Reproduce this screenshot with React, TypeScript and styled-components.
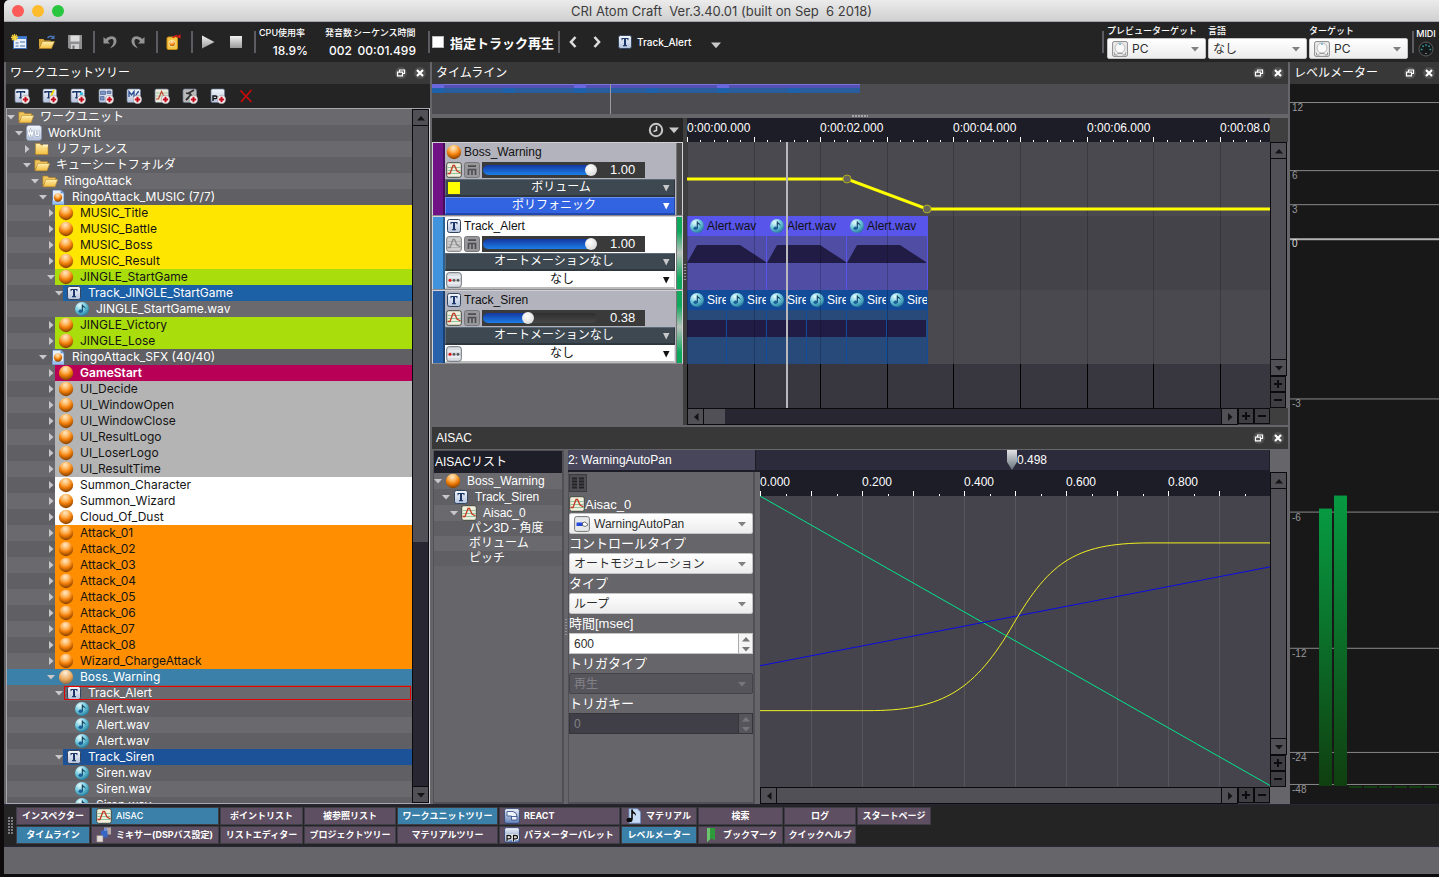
import React from 'react';
import styled, { createGlobalStyle, css } from 'styled-components';

const UI = `Inter, "Noto Sans CJK JP", sans-serif`;
const HELV = `"Liberation Sans", "Noto Sans CJK JP", sans-serif`;
const GREY = '#66656a';

const Global = createGlobalStyle`
  * { box-sizing: border-box; }
  body { margin: 0; background: #0d0b0c; font-family: ${UI}; font-size: 12px; color: #fff; overflow: hidden; }
  button, select, input { font: inherit; color: inherit; margin: 0; border: 0; padding: 0; border-radius: 0; background: none; }
  ul { list-style: none; margin: 0; padding: 0; }
  h1, h2, h3 { margin: 0; font-weight: 400; }
  svg { display: block; flex: none; }
  option { color: #222; background: #fff; }
`;

/* ---------- icons ---------- */

const HiddenSvg = styled.svg`position: absolute;`;
const Defs = () => (
  <HiddenSvg width="0" height="0" aria-hidden="true">
    <defs>
      <radialGradient id="ball" cx="0.45" cy="0.22" r="0.8">
        <stop offset="0" stopColor="#ffe9c8" />
        <stop offset="0.35" stopColor="#ffb45a" />
        <stop offset="0.6" stopColor="#f07d08" />
        <stop offset="1" stopColor="#7a3a00" />
      </radialGradient>
      <radialGradient id="paleBall" cx="0.45" cy="0.22" r="0.8">
        <stop offset="0" stopColor="#fff0da" />
        <stop offset="0.6" stopColor="#eaa65a" />
        <stop offset="1" stopColor="#86633f" />
      </radialGradient>
      <radialGradient id="wave" cx="0.35" cy="0.25" r="0.85">
        <stop offset="0" stopColor="#e6fbfd" />
        <stop offset="0.5" stopColor="#6cc6da" />
        <stop offset="1" stopColor="#176d90" />
      </radialGradient>
      <linearGradient id="tile" x1="0" y1="0" x2="0" y2="1">
        <stop offset="0" stopColor="#f4f7fc" />
        <stop offset="1" stopColor="#b4c2dc" />
      </linearGradient>
      <linearGradient id="folder" x1="0" y1="0" x2="0" y2="1">
        <stop offset="0" stopColor="#fff0b0" />
        <stop offset="1" stopColor="#f2bd3e" />
      </linearGradient>
      <linearGradient id="blueTile" x1="0" y1="0" x2="0" y2="1">
        <stop offset="0" stopColor="#f2f5fa" />
        <stop offset="1" stopColor="#5f7fb8" />
      </linearGradient>
      <linearGradient id="silver" x1="0" y1="0" x2="0" y2="1">
        <stop offset="0" stopColor="#f2f2f2" />
        <stop offset="1" stopColor="#9a9a9a" />
      </linearGradient>
      <linearGradient id="pin" x1="0" y1="0" x2="0" y2="1">
        <stop offset="0" stopColor="#e2e2e4" />
        <stop offset="1" stopColor="#66727c" />
      </linearGradient>
      <linearGradient id="meter" x1="0" y1="0" x2="0" y2="1">
        <stop offset="0" stopColor="#079a42" />
        <stop offset="1" stopColor="#103f0f" />
      </linearGradient>
    </defs>
  </HiddenSvg>
);

const Ball = ({ pale }: { pale?: boolean }) => (
  <svg width="16" height="16" viewBox="0 0 16 16">
    <circle cx="8" cy="8" r="7.2" fill={pale ? 'url(#paleBall)' : 'url(#ball)'} />
  </svg>
);
const TIcon = () => (
  <svg width="16" height="16" viewBox="0 0 16 16">
    <rect x="1.500" y="1.500" width="13" height="13" rx="2" fill="url(#tile)" stroke="#33445f" />
    <path d="M4.500 4h7v2.300h-.8L10.300 5H9v6l1 .3v.9H6v-.9L7 11V5H5.700L5.300 6.300h-.8z" fill="#1b3566" />
  </svg>
);
const Wav = () => (
  <svg width="16" height="16" viewBox="0 0 16 16">
    <circle cx="8" cy="8" r="7" fill="url(#wave)" />
    <path d="M8.300 3.400v6.800" stroke="#123e63" strokeWidth="1.100" />
    <path d="M8.300 3.200c.3 1.800 3.600 1.800 3.300 5-.6-1.500-1.700-2-3.300-2.200z" fill="#123e63" />
    <ellipse cx="6.600" cy="10.300" rx="2.100" ry="1.700" fill="#1d5f9a" />
  </svg>
);
const FolderOpen = () => (
  <svg width="16" height="16" viewBox="0 0 16 16">
    <path d="M.8 13V3h4.700l1.300 1.500h6.700V8H4z" fill="#efc45a" stroke="#a87c22" strokeWidth=".6" />
    <path d="M1.200 13.700 4 6.500H15.700L13 13.700z" fill="url(#folder)" stroke="#c29332" strokeWidth=".6" />
  </svg>
);
const FolderClosed = () => (
  <svg width="16" height="16" viewBox="0 0 16 16">
    <path d="M1.500 13.500V2.500h4.500l1 1.500h7v9.500z" fill="url(#folder)" stroke="#b58523" strokeWidth=".6" />
    <path d="M9 3.500h5v2H9z" fill="#fff3c4" />
  </svg>
);
const WU = () => (
  <svg width="16" height="16" viewBox="0 0 16 16">
    <rect x=".5" y=".5" width="15" height="15" rx="2.500" fill="url(#tile)" stroke="#8a98b8" strokeWidth=".6" />
    <path d="M2 5.500l1.300 5 1.300-4.500 1.300 4.500 1.300-5M9.500 5.500v3.500q0 1.700 1.700 1.700t1.700-1.700V5.500" fill="none" stroke="#8b9ab8" strokeWidth="2" />
    <path d="M2 5.500l1.300 5 1.300-4.500 1.300 4.500 1.300-5M9.500 5.500v3.500q0 1.700 1.700 1.700t1.700-1.700V5.500" fill="none" stroke="#fff" strokeWidth="1.300" />
  </svg>
);
const Sheet = () => (
  <svg width="16" height="16" viewBox="0 0 16 16">
    <path d="M2.500 1h8.500l3 3v11.500H2.500z" fill="#e8f1fc" stroke="#4a6ea8" strokeWidth=".8" />
    <path d="M11 1v3h3" fill="#8fb2e4" stroke="#4a6ea8" strokeWidth=".6" />
    <path d="M2.500 11.500l11.500 1v3H2.500z" fill="#9cc0ee" />
    <circle cx="8" cy="8.500" r="4.200" fill="url(#ball)" />
  </svg>
);
const Aisac = ({ off }: { off?: boolean }) => (
  <svg width="16" height="16" viewBox="0 0 16 16">
    <rect x=".7" y=".7" width="14.600" height="14.600" rx="2" fill={off ? '#cfcfcf' : '#f0efdc'} stroke={off ? '#777' : '#444a40'} />
    <path d="M1.500 5.500h13M1.500 8.500h13M1.500 11.500h13" stroke={off ? '#b4b4b4' : '#8fc4a2'} strokeWidth="1" />
    <path d="M1.500 11.500h2.500L7 3.500h1.500L11 9l3.500 2" fill="none" stroke={off ? '#8a8a8a' : '#c23a22'} strokeWidth="1.300" />
  </svg>
);
const Mute = () => (
  <svg width="16" height="16" viewBox="0 0 16 16">
    <rect x=".5" y=".5" width="15" height="15" rx="2" fill="#98989b" stroke="#77777b" />
    <path d="M4 4.200h8M4.500 13V7.500h7V13M8 7.500V13" fill="none" stroke="#4e4e52" strokeWidth="1.700" />
  </svg>
);
const Dots = () => (
  <svg width="16" height="16" viewBox="0 0 16 16">
    <rect x=".7" y=".7" width="14.600" height="14.600" rx="2.500" fill="#d9dee4" stroke="#6a6f76" />
    <path d="M1.500 5h13M1.500 11h13" stroke="#f7f9fb" />
    <circle cx="4" cy="8.300" r="1.500" fill="#e01010" />
    <circle cx="8" cy="8.300" r="1.400" fill="#555" />
    <circle cx="12" cy="8.300" r="1.400" fill="#555" />
  </svg>
);
const Disk = () => (
  <svg width="16" height="16" viewBox="0 0 16 16">
    <rect x=".6" y=".6" width="14.800" height="14.800" rx="1.500" fill="#ececec" stroke="#8a8a8a" />
    <circle cx="8" cy="7" r="5" fill="#fafafa" stroke="#aaa" strokeWidth=".8" />
    <path d="M2.500 11.500v2.500h3M13.500 11.500v2.500h-3M5.500 12.500h5" fill="none" stroke="#999" />
    <path d="M7.200 2.500h1.600v1.300H7.200z" fill="#2aa0d8" />
  </svg>
);
const Plus = () => (
  <g>
    <circle cx="11.500" cy="11.500" r="4.200" fill="#f6f6f6" stroke="#999" strokeWidth=".6" />
    <path d="M11.500 8.800v5.400M8.800 11.500h5.400" stroke="#c40d1e" strokeWidth="2" />
  </g>
);
const AddIcon = ({ kind }: { kind: string }) => (
  <svg width="16" height="16" viewBox="0 0 16 16">
    <rect x="1" y="1" width="13.500" height="13.500" rx="1.500" fill={kind === 'curve' ? '#eceadb' : kind === 'act' ? '#b9b9b9' : 'url(#tile)'} stroke="#6f7c96" strokeWidth=".7" />
    {kind[0] === 't' && <path d="M3 5V3.700h7.500V5M6.700 3.700V9.500M5.300 9.700h3" fill="none" stroke="#1b3566" strokeWidth="1.400" />}
    {kind === 't2' && <path d="M12 2 9 8" stroke="#f0d400" strokeWidth="1.800" />}
    {kind === 't3' && <path d="M10 4.500h3v2.500h-3z" fill="#35c4e8" />}
    {kind === 'grid' && <path d="M2.500 3h5v3.500h-5zM9 3h4v2.500H9zM2.500 8.500h3.500V12H2.500z" fill="#7d96c4" stroke="#3c5486" strokeWidth=".6" />}
    {kind === 'm' && <path d="M3 9V3.500L5.500 7 8 3.500V9M9 8c2 0 1-4 4-4.500" fill="none" stroke="#2a4c92" strokeWidth="1.300" />}
    {kind === 'curve' && <><path d="M1.500 5h12.500M1.500 8h12.500" stroke="#8fb79a" strokeWidth=".8" /><path d="M2 11h2.500L7.500 3.500 10 8.500" fill="none" stroke="#c0452e" strokeWidth="1.200" /></>}
    {kind === 'act' && <path d="M4 12 9 7l-2-2 5-3M8 6l-4-1M9 7l2 3" fill="none" stroke="#333" strokeWidth="1.800" />}
    {kind === 'p' && <path d="M3 13V8h2.500q1.500 0 1.500 1.300T5.500 10.600H3" fill="none" stroke="#111" strokeWidth="1.400" />}
    <Plus />
  </svg>
);
const Cross = () => (
  <svg width="14" height="14" viewBox="0 0 14 14">
    <path d="M1.500 1.500 12.500 13M12.500 1 2 13" stroke="#cc0a0a" strokeWidth="1.700" />
  </svg>
);
const NewProj = () => (
  <svg width="16" height="16" viewBox="0 0 16 16">
    <rect x="2.500" y="2.500" width="13" height="12" fill="#eaf1fb" stroke="#3f6fb8" />
    <path d="M3 4h12" stroke="#3f7fd8" strokeWidth="2" />
    <path d="M4.500 9h3M4.500 12h3M9 8h5M9 12h5" stroke="#7a9cc8" strokeWidth="1.600" />
    <path d="M3.500 0v7M0 3.500h7M1 1l5 5M6 1 1 6" stroke="#f7d23a" strokeWidth="1.300" />
  </svg>
);
const OpenProj = () => (
  <svg width="18" height="16" viewBox="0 0 18 16">
    <path d="M1 14V5h4.500l1 1.500h6V9H4z" fill="#d9a63a" />
    <path d="M1 14.500 4.500 7.500H16.500L13.500 14.500z" fill="url(#folder)" stroke="#b58523" strokeWidth=".6" />
    <path d="M9.500 4Q12 1 15 3" fill="none" stroke="#4777b8" strokeWidth="1.300" />
    <path d="M16.500 1v4h-4z" fill="#4777b8" />
  </svg>
);
const Save = () => (
  <svg width="16" height="16" viewBox="0 0 16 16">
    <path d="M1 1h14v14H2.500L1 13.500z" fill="#8f8f92" />
    <path d="M3.500 1.500h9v6h-9z" fill="#dcdcdc" />
    <path d="M4 10h8v5H4z" fill="#cfcfcf" />
    <path d="M5.500 11.500h2V15h-2z" fill="#6f6f72" />
  </svg>
);
const Undo = ({ flip }: { flip?: boolean }) => (
  <svg width="16" height="16" viewBox="0 0 16 16">
    <g transform={flip ? 'translate(16 0) scale(-1 1)' : undefined} fill="#939396">
      <path d="M1.500 3v6.500H8L5.800 7.200C8 4.500 11 4.300 11.500 6.800 12 9.500 10 12 8 14.500 12 13 14.800 10 14.500 6.500 14 1.500 7.500 1 3.700 5z" />
    </g>
  </svg>
);
const Build = () => (
  <svg width="16" height="16" viewBox="0 0 16 16">
    <rect x="2" y="3" width="10.500" height="12.500" rx="1.500" fill="#f6c544" stroke="#c98d12" />
    <circle cx="7.200" cy="9.500" r="3.300" fill="url(#ball)" stroke="#fbe7a0" />
    <path d="M8 4Q9 1.500 12.500 1.700" fill="none" stroke="#e01515" strokeWidth="1.300" />
    <path d="M15.500 0v4.500L11.500 3z" fill="#e01515" />
  </svg>
);
const Play = () => (
  <svg width="14" height="14" viewBox="0 0 14 14"><path d="M1 .5 13.500 7 1 13.500z" fill="url(#silver)" /></svg>
);
const Stop = () => (
  <svg width="14" height="14" viewBox="0 0 14 14"><path d="M1 1h12v12H1z" fill="url(#silver)" /></svg>
);
const Chevron = ({ right }: { right?: boolean }) => (
  <svg width="10" height="14" viewBox="0 0 10 14">
    <path d={right ? 'M2.500 2 7 7l-4.500 5' : 'M7.500 2 3 7l4.500 5'} fill="none" stroke="#dcdcdc" strokeWidth="2.600" />
  </svg>
);
const Tri = ({ dir, color = '#c8c8ca', size = 8 }: { dir: 'u' | 'd' | 'l' | 'r' | 'deep'; color?: string; size?: number }) => {
  const d = { u: 'M0 6.500h8L4 2z', d: 'M0 2h8L4 6.500z', l: 'M6.500 0v8L2 4z', r: 'M2 0v8l4.500-4z', deep: 'M1 1h6.500L4.200 7.500z' }[dir];
  return <svg width={size} height={size} viewBox="0 0 8 8"><path d={d} fill={color} /></svg>;
};
const Midi = () => (
  <svg width="16" height="16" viewBox="0 0 16 16">
    <circle cx="8" cy="8" r="7" fill="#16191a" stroke="#5c5c5e" />
    <path d="M3.600 8.500h.1M5 5.300h.1M8 4h.1M11 5.300h.1M12.300 8.500h.1" stroke="#35a5a5" strokeWidth="1.500" strokeLinecap="square" />
    <path d="M7 12.500h2" stroke="#777" />
  </svg>
);
const Clock = () => (
  <svg width="16" height="16" viewBox="0 0 16 16">
    <circle cx="8" cy="8" r="6.200" fill="#2a2a2a" stroke="#c6c6c6" strokeWidth="2" />
    <path d="M8.500 4v4.500L5.500 9.500" fill="none" stroke="#d6d6d6" strokeWidth="1.500" />
  </svg>
);
const Undock = () => (
  <svg width="12" height="12" viewBox="0 0 12 12">
    <circle cx="6" cy="6" r="6" fill="#505050" />
    <path d="M4.500 5V3h5v3.500H8M2.500 5.200h5v3.600h-5z" fill="none" stroke="#fff" strokeWidth="1.200" />
  </svg>
);
const Close = () => (
  <svg width="12" height="12" viewBox="0 0 12 12">
    <circle cx="6" cy="6" r="6" fill="#505050" />
    <path d="M3 3l6 6M9 3 3 9" stroke="#fff" strokeWidth="2.200" />
  </svg>
);
const Mixer = () => (
  <svg width="16" height="16" viewBox="0 0 16 16">
    <path d="M8 .5h7v7H8z" fill="#b8a9a4" />
    <path d="M5 3.500h6.500v7H5z" fill="#3566c8" />
    <path d="M.8 8.500H7v6.500H.8z" fill="#e4dcd8" stroke="#857b7b" strokeWidth=".6" />
    <path d="M8 1h3v2.500H8z" fill="#6f93e0" />
  </svg>
);
const Reactor = () => (
  <svg width="16" height="16" viewBox="0 0 16 16">
    <rect x=".6" y=".6" width="14.800" height="14.800" rx="2" fill="url(#blueTile)" stroke="#2c3f70" strokeWidth=".8" />
    <path d="M3 3.500h6q4 1 4 5V12H7.500V8H3z" fill="#f0f4fb" stroke="#3d568f" strokeWidth=".9" />
    <path d="M7.500 8.500H13" fill="none" stroke="#3d568f" strokeWidth=".9" />
  </svg>
);
const Palette = () => (
  <svg width="16" height="16" viewBox="0 0 16 16">
    <rect x=".6" y=".6" width="14.800" height="14.800" rx="2" fill="url(#blueTile)" stroke="#2c3f70" strokeWidth=".8" />
    <path d="M3 14.500V8.500h2.300Q7 8.500 7 10.200t-1.700 1.700H3M9.500 14.500V8.500h2.300q1.700 0 1.700 1.700t-1.700 1.700H9.500" fill="none" stroke="#fff" strokeWidth="2.800" />
    <path d="M3 14.500V8.500h2.300Q7 8.500 7 10.200t-1.700 1.700H3M9.500 14.500V8.500h2.300q1.700 0 1.700 1.700t-1.700 1.700H9.500" fill="none" stroke="#111" strokeWidth="1.300" />
  </svg>
);
const Material = () => (
  <svg width="16" height="16" viewBox="0 0 16 16">
    <path d="M3 .8h8.500L14.500 4v11.200H3z" fill="#c8dcf6" stroke="#6c8fc4" strokeWidth=".8" />
    <path d="M6 1.500v10" stroke="#0a0a0a" strokeWidth="1.600" />
    <path d="M6 1c.5 3 4.500 3 4 7C9 6 7.500 5.500 6 5.500z" fill="#0a0a0a" />
    <ellipse cx="3.500" cy="12" rx="3" ry="2.200" fill="#0a0a0a" />
  </svg>
);
const Bookmark = () => (
  <svg width="16" height="16" viewBox="0 0 16 16">
    <path d="M4 1h8v12.500l-3.500-2L4 15z" fill="#2f9a3a" /><path d="M4 1h3v11.500L4 15z" fill="#6cc56e" />
  </svg>
);
const Knob = () => (
  <svg width="16" height="16" viewBox="0 0 16 16">
    <rect x=".6" y=".6" width="14.800" height="14.800" rx="2" fill="#e6e8ea" stroke="#777" />
    <path d="M2.500 6.500h7v3.500h-7z" fill="#2348d8" /><path d="M8.500 7l2-1 2 1 1.500 2-3 1.500L8.500 9.500z" fill="#fff" stroke="#555" strokeWidth=".8" />
  </svg>
);

/* ---------- window frame ---------- */

const Window = styled.div`
  height: 100vh; min-height: 600px; padding: 0 0 3px 4px;
  display: flex; flex-direction: column;
`;
const TitleBar = styled.header`
  flex: none; height: 22px; display: flex; align-items: center; padding: 0 8px; gap: 8px;
  border-radius: 5px 0 0 0; background: linear-gradient(#ebebeb, #d0d0d0); border-bottom: 1px solid #a5a5b0; color: #3c3c3c;
`;
const Light = styled.button<{ $c: string }>`
  width: 12px; height: 12px; border-radius: 50%; background: ${p => p.$c};
`;
const Title = styled.h1`flex: 1; text-align: center; font-size: 13px; line-height: 20px; white-space: pre; padding-right: 60px;`;

const ToolBar = styled.div`
  flex: none; height: 40px; display: flex; align-items: center; background: #242424; padding: 0 2px 0 1px; white-space: nowrap;
`;
const Tool = styled.button<{ $w?: number }>`
  width: ${p => p.$w ?? 28}px; height: 28px; display: flex; align-items: center; justify-content: center;
`;
const Sep = styled.div`flex: none; width: 2px; height: 22px; margin: 0 1px 0 4px; background: #5c5c62;`;
const Stat = styled.dl<{ $w: number }>`
  margin: 0; width: ${p => p.$w}px; display: flex; flex-direction: column; gap: 4px; text-align: right;
  dt { font-size: 9px; line-height: 12px; font-weight: 500; text-align: left; }
  dd { margin: 0; font-size: 12px; line-height: 16px; font-weight: 500; }
`;
const Stats = styled.div`display: flex; padding: 2px 8px 0 2px;`;
const Gap = styled.div<{ $w: number }>`flex: none; width: ${p => p.$w}px;`;
const TrackPlay = styled.label`
  display: flex; align-items: center; gap: 6px; padding: 0 0 0 1px; font-size: 13px; font-weight: 700;
  input { appearance: none; width: 12px; height: 12px; background: #fff; border: 1px solid #bbb; }
`;
const Current = styled.button`
  display: flex; align-items: center; gap: 4px; margin-left: 8px; font-size: 10px; font-weight: 500;
  svg:last-child { margin: 6px 0 0 16px; }
`;
const Fill = styled.div`flex: 1;`;
const Target = styled.label`
  display: flex; flex-direction: column; gap: 1px; width: 99px; margin-left: 2px; font-size: 9px; line-height: 12px; font-weight: 500;
`;
const ComboBox = styled.div<{ $off?: boolean }>`
  display: flex; align-items: center; height: 21px; padding: 0 6px 0 4px; border-radius: 2px;
  background: ${p => (p.$off ? '#56555c' : 'linear-gradient(#fff, #ececec)')};
  border: 1px solid ${p => (p.$off ? '#44434a' : '#c4c4c4')};
  color: ${p => (p.$off ? '#828188' : '#2e2e2e')};
  select { appearance: none; flex: 1; min-width: 0; height: 19px; font-size: 12px; font-weight: 400; opacity: 1; color: inherit; outline: 0; }
  svg + select { padding-left: 4px; }
`;
const Combo = ({ id, value, icon, off }: { id?: string; value: string; icon?: React.ReactNode; off?: boolean }) => (
  <ComboBox $off={off}>
    {icon}
    <select id={id} disabled={off} aria-label={id ? undefined : value}><option>{value}</option></select>
    <Tri dir="d" color={off ? '#77767d' : '#808080'} />
  </ComboBox>
);
const MidiBox = styled.div`display: flex; flex-direction: column; align-items: center; gap: 1px; font-size: 9px; line-height: 12px; font-weight: 500; width: 22px;`;

const Main = styled.main`
  flex: 1; min-height: 0; display: grid; grid-template-columns: 424px minmax(0, 1fr) 149px; gap: 2px;
  background: ${GREY}; padding-left: 2px;
`;
const Panel = styled.section`min-height: 0; min-width: 0; display: flex; flex-direction: column;`;
const PanelHead = styled.div`
  flex: none; height: 22px; padding: 0 4px 0 4px; display: flex; align-items: center; gap: 7px; background: #383838;
  h2 { flex: 1; font-size: 12px; line-height: 20px; font-family: ${HELV}; }
`;
const Head = ({ title }: { title: string }) => (
  <PanelHead>
    <h2>{title}</h2>
    <button aria-label="Undock"><Undock /></button>
    <button aria-label="Close"><Close /></button>
  </PanelHead>
);

/* ---------- scroll bars ---------- */

const Bar = styled.div<{ $v?: boolean }>`
  flex: none; display: flex; flex-direction: ${p => (p.$v ? 'column' : 'row')};
  ${p => (p.$v ? 'width: 17px;' : 'height: 17px;')}
  background: #282731; border: 1px solid #0b0b0d;
`;
const BarFill = styled.div<{ $v?: boolean }>`flex: 1; min-width: 0; min-height: 0; display: flex; flex-direction: ${p => (p.$v ? 'column' : 'row')};`;
const Thumb = styled.div<{ $len: number }>`flex: 0 0 ${p => p.$len}%; background: #515056;`;
const BarBtn = styled.button<{ $v?: boolean }>`
  flex: none; width: ${p => (p.$v ? 15 : 16)}px; height: ${p => (p.$v ? 16 : 15)}px; background: #515056;
  display: flex; align-items: center; justify-content: center;
  ${p => (p.$v ? 'border-bottom: 1px solid #0b0b0d; &:last-child { border-bottom: 0; border-top: 1px solid #0b0b0d; }'
    : 'border-right: 1px solid #0b0b0d; &:last-child { border-right: 0; border-left: 1px solid #0b0b0d; }')}
`;
const ZoomBtn = styled.button`
  flex: none; width: 16px; height: 16px; background: #3f3e42; border: 1px solid #0b0b0d;
  display: flex; align-items: center; justify-content: center;
`;
const Scroll = ({ v, len = 100 }: { v?: boolean; len?: number }) => (
  <>
    <BarBtn $v={v} aria-label="Back"><Tri dir={v ? 'u' : 'l'} color="#141416" /></BarBtn>
    <BarFill $v={v}><Thumb $len={len} /></BarFill>
    <BarBtn $v={v} aria-label="Forward"><Tri dir={v ? 'd' : 'r'} color="#141416" /></BarBtn>
  </>
);
const GrowBar = styled(Bar)`flex: 1; min-height: 0; min-width: 0;`;
const Zooms = () => (
  <>
    <ZoomBtn aria-label="Zoom in"><svg width="8" height="8"><path d="M4 0v8M0 4h8" stroke="#0d0d0f" strokeWidth="2" /></svg></ZoomBtn>
    <ZoomBtn aria-label="Zoom out"><svg width="8" height="8"><path d="M0 4h8" stroke="#0d0d0f" strokeWidth="2" /></svg></ZoomBtn>
  </>
);

/* ---------- work unit tree ---------- */

const AddBar = styled.div`
  flex: none; height: 24px; padding-left: 2px; display: flex; align-items: center; background: #242424;
`;
const TreeWrap = styled.div`
  flex: 1; min-height: 0; display: flex; border: 1px solid #a8a8ac; border-right-color: #d0d0d4;
`;
const Rows = styled.ul`flex: 1; min-width: 0; overflow: hidden;`;
const Row = styled.li<{ $lv: number; $bg?: string; $full?: boolean; $ink?: string; $h?: number }>`
  height: ${p => p.$h ?? 16}px; display: flex; padding-left: ${p => p.$lv * 8}px; white-space: nowrap;
  background: ${p => (p.$full ? p.$bg : '#69696e')}; color: ${p => p.$ink ?? '#fff'};
  &:nth-child(even) { background: ${p => (p.$full ? p.$bg : '#5f5f64')}; }
`;
const Twist = styled.button`flex: none; width: 8px; height: 16px; display: flex; align-items: center; justify-content: center;`;
const Cell = styled.div<{ $bg?: string; $ring?: boolean; $bold?: boolean }>`
  flex: 1; height: 16px; display: flex; align-items: center; gap: 6px; padding-left: 3px; background: ${p => p.$bg ?? 'transparent'};
  font-size: 12px; line-height: 16px; font-weight: ${p => (p.$bold ? 600 : 400)};
  ${p => p.$ring && css`outline: 1px solid #e80000; outline-offset: -2px;`}
`;

const icons = {
  fo: <FolderOpen />, fc: <FolderClosed />, wu: <WU />, sheet: <Sheet />, ball: <Ball />, pale: <Ball pale />, t: <TIcon />, wav: <Wav />, aisac: <Aisac />,
};
type Item = { lv: number; ic: keyof typeof icons; t: string; open?: boolean; leaf?: boolean; bg?: string; ink?: string; full?: boolean; ring?: boolean; bold?: boolean };
const cues = (names: string[], bg: string): Item[] => names.map(t => ({ lv: 5, ic: 'ball', t, bg, ink: '#141414' }));
const wavs = (t: string, n: number): Item[] => Array.from({ length: n }, () => ({ lv: 7, ic: 'wav', t, leaf: true }));

const tree: Item[] = [
  { lv: 0, ic: 'fo', t: 'ワークユニット', open: true },
  { lv: 1, ic: 'wu', t: 'WorkUnit', open: true },
  { lv: 2, ic: 'fc', t: 'リファレンス' },
  { lv: 2, ic: 'fo', t: 'キューシートフォルダ', open: true },
  { lv: 3, ic: 'fo', t: 'RingoAttack', open: true },
  { lv: 4, ic: 'sheet', t: 'RingoAttack_MUSIC (7/7)', open: true },
  ...cues(['MUSIC_Title', 'MUSIC_Battle', 'MUSIC_Boss', 'MUSIC_Result'], '#ffe600'),
  { lv: 5, ic: 'ball', t: 'JINGLE_StartGame', open: true, bg: '#aadd0c', ink: '#141414' },
  { lv: 6, ic: 't', t: 'Track_JINGLE_StartGame', open: true, bg: '#1c60a6' },
  { lv: 7, ic: 'wav', t: 'JINGLE_StartGame.wav', leaf: true },
  ...cues(['JINGLE_Victory', 'JINGLE_Lose'], '#aadd0c'),
  { lv: 4, ic: 'sheet', t: 'RingoAttack_SFX (40/40)', open: true },
  { lv: 5, ic: 'ball', t: 'GameStart', bg: '#b80057', bold: true },
  ...cues(['UI_Decide', 'UI_WindowOpen', 'UI_WindowClose', 'UI_ResultLogo', 'UI_LoserLogo', 'UI_ResultTime'], '#b4b4b4'),
  ...cues(['Summon_Character', 'Summon_Wizard', 'Cloud_Of_Dust'], '#ffffff'),
  ...cues(['Attack_01', 'Attack_02', 'Attack_03', 'Attack_04', 'Attack_05', 'Attack_06', 'Attack_07', 'Attack_08', 'Wizard_ChargeAttack'], '#ff8f00'),
  { lv: 5, ic: 'pale', t: 'Boss_Warning', open: true, full: true, bg: '#3a80a9' },
  { lv: 6, ic: 't', t: 'Track_Alert', open: true, ring: true },
  ...wavs('Alert.wav', 3),
  { lv: 6, ic: 't', t: 'Track_Siren', open: true, bg: '#1c5297' },
  ...wavs('Siren.wav', 3),
];

const TreeRow = ({ it }: { it: Item }) => (
  <Row $lv={it.lv} $bg={it.bg} $full={it.full} $ink={it.ink}>
    <Twist aria-label={it.t}>{!it.leaf && <Tri dir={it.open ? 'd' : 'r'} />}</Twist>
    <Cell $bg={it.full ? undefined : it.bg} $ring={it.ring} $bold={it.bold}>{icons[it.ic]}{it.t}</Cell>
  </Row>
);

const WorkUnits = () => (
  <Panel>
    <Head title="ワークユニットツリー" />
    <AddBar>
      {['t1', 't2', 't3', 'grid', 'm', 'curve', 'act', 'p'].map(k => <Tool key={k} aria-label={`Add ${k}`}><AddIcon kind={k} /></Tool>)}
      <Tool aria-label="Delete"><Cross /></Tool>
    </AddBar>
    <TreeWrap>
      <Rows>{tree.map((it, i) => <TreeRow key={i} it={it} />)}</Rows>
      <Bar $v><Scroll v len={63} /></Bar>
    </TreeWrap>
  </Panel>
);

/* ---------- timeline ---------- */

const Middle = styled.div`min-width: 0; min-height: 0; display: flex; flex-direction: column; gap: 2px;`;
const TimelinePanel = styled(Panel)`flex: 363 1 0;`;
const AisacPanel = styled(Panel)`flex: 376 1 0;`;
const Overview = styled.div`flex: none; height: 30px; background: #4d4c50;`;
const RowGrip = styled.div`
  flex: none; height: 4px; display: flex; align-items: center; justify-content: center;
  &::before { content: ''; width: 16px; height: 2px; background: repeating-linear-gradient(90deg, #a6a6aa 0 2px, transparent 2px 3px); }
`;
const Split = styled.div`flex: 1; min-height: 0; display: grid; grid-template-columns: 251px 4px minmax(0, 1fr) 18px;`;
const Grip = styled.div`
  background: #3f3f40; display: flex; align-items: center; justify-content: center;
  &::before { content: ''; width: 2px; height: 16px; background: repeating-linear-gradient(#96969a 0 1px, transparent 1px 3px); }
`;
const Column = styled.div`min-width: 0; min-height: 0; display: flex; flex-direction: column;`;
const ListHead = styled.div`
  flex: none; height: 24px; background: #242424; display: flex; align-items: center; justify-content: flex-end; gap: 5px; padding-right: 4px;
`;
const Track = styled.article<{ $bg: string }>`
  flex: none; height: 74px; display: flex; background: ${p => p.$bg}; color: #111; border: 1px solid #d2d2d6; border-bottom-color: #8a8a8e;
  font-family: ${HELV}; font-size: 12px;
`;
const Stripe = styled.div<{ $c: string }>`flex: none; width: 12px; background: ${p => p.$c}; border-right: 2px solid #0005;`;
const TrackBody = styled.div`flex: 1; min-width: 0; display: flex; flex-direction: column; padding-right: 1px;`;
const Line = styled.div<{ $h: number }>`
  height: ${p => p.$h}px; display: flex; align-items: center; gap: 2px; padding-left: 1px;
  h3 { font-size: 12px; line-height: 16px; }
`;
const VolBox = styled.div`
  display: flex; align-items: center; gap: 13px; width: 163px; height: 16px; background: #3a3a3a; padding-left: 1px;
  color: #fff; font-size: 13px; line-height: 16px;
`;
const Slider = styled.input<{ $v: number }>`
  appearance: none; width: 114px; height: 10px; border-radius: 5px;
  background: linear-gradient(#1537a0, #1c7fe8) 0 0 / ${p => p.$v * 90 + 5}% 100% no-repeat, linear-gradient(#2e2e2e, #474747);
  &::-webkit-slider-thumb { appearance: none; width: 12px; height: 12px; border-radius: 50%; background: radial-gradient(circle at 40% 35%, #fff, #cfcfcf); }
`;
const Menu = styled.label<{ $tone: 'dark' | 'blue' | 'white' }>`
  flex: none; height: 18px; display: flex; align-items: center; padding-right: 4px;
  background: ${p => ({ dark: '#3d4851', blue: '#3264e2', white: '#fff' }[p.$tone])};
  color: ${p => (p.$tone === 'white' ? '#111' : '#fff')};
  border-style: solid; border-width: 1px 1px 2px 1px;
  border-color: ${p => ({ dark: '#5b6a76 #2e373e #2e373e #5b6a76', blue: '#6a90f4 #2146ae #2146ae #6a90f4', white: '#fff #ddd #bbb #fff' }[p.$tone])};
  select { flex: 1; min-width: 0; appearance: none; text-align: center; font-size: 12px; height: 15px; line-height: 15px; outline: 0; }
`;
const Swatch = styled.span`width: 12px; height: 12px; margin-left: 2px; background: #ff0;`;
const Level = styled.div<{ $on?: boolean }>`
  flex: none; width: 6px; border-left: 1px solid #777;
  background: ${p => (p.$on ? 'linear-gradient(#0fa85c 20%, #b9c2bd 50%, #0fa85c 85%)' : '#4a4a4a')};
`;
type TrackInfo = { name: string; vol: number; stripe: string; bg: string; cue?: boolean; off?: boolean };
const tracks: TrackInfo[] = [
  { name: 'Boss_Warning', vol: 1, stripe: '#701286', bg: '#b3b3bd', cue: true },
  { name: 'Track_Alert', vol: 1, stripe: '#4193dc', bg: '#ffffff', off: true },
  { name: 'Track_Siren', vol: 0.38, stripe: '#2862ac', bg: '#b3b3bd' },
];
const TrackCard = ({ t }: { t: TrackInfo }) => (
  <Track $bg={t.bg}>
    <Stripe $c={t.stripe} />
    <TrackBody>
      <Line $h={18}>{t.cue ? <Ball /> : <TIcon />}<h3>{t.name}</h3></Line>
      <Line $h={18}>
        <Aisac off={t.off} /><Mute />
        <VolBox>
          <Slider type="range" min="0" max="1" step="0.01" defaultValue={t.vol} $v={t.vol} aria-label={`${t.name} volume`} />
          <output>{t.vol.toFixed(2)}</output>
        </VolBox>
      </Line>
      <Menu $tone="dark">
        {t.cue && <Swatch />}
        <select aria-label="Automation"><option>{t.cue ? 'ボリューム' : 'オートメーションなし'}</option></select>
        <Tri dir="deep" color="#c8c8ca" />
      </Menu>
      <Menu $tone={t.cue ? 'blue' : 'white'}>
        {!t.cue && <Dots />}
        <select aria-label="Mode"><option>{t.cue ? 'ポリフォニック' : 'なし'}</option></select>
        <Tri dir="deep" color={t.cue ? '#fff' : '#111'} />
      </Menu>
    </TrackBody>
    <Level $on={!t.cue} />
  </Track>
);

const Ruler = styled.svg`width: 100%; height: 24px; background: #1d1d27; font-family: ${HELV}; font-size: 12px; fill: #fff;`;
const RulerTicks = ({ step, sub, labels, count, every }: { step: number; sub: number; labels: string[]; count: number; every: number }) => (
  <Ruler>
    {Array.from({ length: count }, (_, i) => {
      const x = Math.round(i * step);
      return <rect key={i} x={x} y={i % sub ? 22 : 19} width="1" height={i % sub ? 2 : 5} />;
    })}
    {labels.map((l, i) => <text key={l} x={Math.round(i * every)} y="14">{l}</text>)}
  </Ruler>
);
const Canvas = styled.div`position: relative; flex: 1; min-height: 0; overflow: hidden; background: #38373f;`;
const Overlay = styled.svg`position: absolute; inset: 0; width: 100%; height: 100%; pointer-events: none;`;
const Lane = styled.div<{ $bg: string }>`height: 74px; display: flex; background: ${p => p.$bg};`;
const Clip = styled.button<{ $w: number; $head: string; $body: string; $ink: string }>`
  flex: none; width: ${p => p.$w}px; height: 74px; overflow: hidden; text-align: left; color: ${p => p.$ink};
  background: linear-gradient(${p => p.$head} 0 20px, ${p => p.$body} 20px); border-right: 1px solid ${p => p.$head};
  font-family: ${HELV}; font-size: 12px;
  span { display: flex; align-items: center; gap: 2px; height: 20px; padding-left: 2px; white-space: nowrap; }
`;
const Corner = styled.div<{ $h: number; $c: string }>`flex: none; height: ${p => p.$h}px; background: ${p => p.$c};`;
const HRow = styled.div`flex: none; display: flex; background: #3f3f40;`;

const SEC = 66.6;
const Timeline = () => (
  <TimelinePanel>
    <Head title="タイムライン" />
    <Overview>
      <svg width="100%" height="30">
        <rect width="428" height="4" fill="#5450b4" /><rect width="428" height="1" fill="#7a76d8" />
        <rect y="4" width="428" height="5" fill="#2a5d9e" />
        {[0, 142, 285].map(x => <rect key={x} x={x} width="12" height="4" fill="#6a66dc" />)}
        {[0, 71, 142, 214, 285, 356].map(x => <rect key={x} x={x} y="4" width="12" height="5" fill="#1f62ac" />)}
        <rect x="178" width="1" height="30" fill="#9a999e" />
      </svg>
    </Overview>
    <RowGrip />
    <Split>
      <Column>
        <ListHead><Clock /><Tri dir="d" size={10} /></ListHead>
        {tracks.map(t => <TrackCard key={t.name} t={t} />)}
      </Column>
      <Grip />
      <Column>
        <RulerTicks step={SEC / 5} sub={5} count={80} every={SEC * 2} labels={['0:00:00.000', '0:00:02.000', '0:00:04.000', '0:00:06.000', '0:00:08.000']} />
        <Canvas>
          <Lane $bg="#4a4950" />
          <Lane $bg="#44434a">
            {[0, 1, 2].map(i => (
              <Clip key={i} $w={i < 2 ? 80 : 81} $head="#5855ea" $body="#504da5" $ink="#111">
                <span><Wav />Alert.wav</span>
                <svg width="80" height="54"><path d="M0 27 10 9H53L79 26v1z" fill="#201c45" /></svg>
              </Clip>
            ))}
          </Lane>
          <Lane $bg="#4a4950">
            {[0, 1, 2, 3, 4, 5].map(i => (
              <Clip key={i} $w={i < 5 ? 40 : 41} $head="#124b98" $body="#274a7a" $ink="#fff">
                <span><Wav />Siren.wav</span>
                <svg width="40" height="54"><path d="M0 10h39v17H0z" fill="#201c45" /></svg>
              </Clip>
            ))}
          </Lane>
          <Overlay>
            {Array.from({ length: 30 }, (_, i) => {
              const x = Math.round(i * SEC);
              return <g key={i}><rect x={x} width="1" height="222" fill="#0003" /><rect x={x} y="222" width="1" height="900" fill="#000" /></g>;
            })}
            <path d="M0 37H160L240 67H4000" fill="none" stroke="#ff0" strokeWidth="3" />
            <circle cx="160" cy="37" r="4" fill="#66655c" stroke="#b0ac20" /><circle cx="240" cy="67" r="4" fill="#66655c" stroke="#b0ac20" />
            <rect x="99" width="2" height="900" fill="#b9b9bd" />
          </Overlay>
        </Canvas>
        <HRow><GrowBar><Scroll len={4} /></GrowBar><Zooms /></HRow>
      </Column>
      <Column>
        <Corner $h={24} $c="#3f3f40" />
        <GrowBar $v><Scroll v /></GrowBar>
        <Zooms />
        <Corner $h={17} $c="#3f3f40" />
      </Column>
    </Split>
  </TimelinePanel>
);

/* ---------- AISAC ---------- */

const AisacGrid = styled.div`
  flex: 1; min-height: 0; display: grid; grid-template-columns: 131px 4px 187px minmax(0, 1fr) 16px; grid-template-rows: 22px minmax(0, 1fr);
  padding: 1px 2px 0 1px; font-family: ${HELV};
`;
const ListCol = styled(Column)`grid-row: 1 / 3; border: 2px solid #515056; border-top-width: 1px; border-left-width: 1px; font-size: 12px;`;
const ListTitle = styled.h3`flex: none; height: 22px; background: #1e1e28; font-size: 12px; line-height: 22px; padding-left: 1px;`;
const ListRows = styled.ul``;
const Leafs = styled.span`flex: 1; padding-left: 11px; line-height: 15px;`;
const ThinGrip = styled(Grip)`grid-row: 1 / 3; background: ${GREY};`;
const FormHead = styled.h3`background: #47465a; border-bottom: 2px solid #1d1d27; font-size: 12px; line-height: 21px;`;
const Pos = styled.div`
  background: #2c2b3c; border: solid #1d1d27; border-width: 0 1px 2px; display: flex; align-items: center; padding-left: 251px; font-size: 12px; min-width: 0;
`;
const Form = styled.form`
  display: flex; flex-direction: column; border: solid #515056; border-width: 0 2px 2px 1px; padding-top: 2px; min-height: 0; overflow: hidden;
  label { font-size: 13px; line-height: 19px; height: 19px; }
`;
const TableBtn = styled.button`
  flex: none; width: 18px; height: 18px; margin-bottom: 3px; background: #4f4e54; border: 1px solid #3c3b40; display: flex; align-items: center; justify-content: center;
`;
const NameLine = styled.div`display: flex; align-items: center; height: 18px; font-size: 13px;`;
const Spin = styled.div<{ $off?: boolean }>`
  height: 21px; display: flex; border: 1px solid ${p => (p.$off ? '#36353c' : '#c4c4c4')};
  background: ${p => (p.$off ? '#403f47' : '#fff')}; color: ${p => (p.$off ? '#828188' : '#2e2e2e')};
  input { flex: 1; min-width: 0; padding-left: 4px; font-size: 12px; color: inherit; outline: 0; }
  div { width: 14px; display: flex; flex-direction: column; border-left: 1px solid ${p => (p.$off ? '#36353c' : '#aaa')}; background: ${p => (p.$off ? '#56555c' : '#f4f4f4')}; }
  button { flex: 1; display: flex; align-items: center; justify-content: center; }
`;
const SpinBox = ({ id, v, off }: { id: string; v: string; off?: boolean }) => (
  <Spin $off={off}>
    <input id={id} type="text" defaultValue={v} disabled={off} />
    <div>
      <button type="button" aria-label="Up"><Tri dir="u" color={off ? '#77767d' : '#777'} /></button>
      <button type="button" aria-label="Down"><Tri dir="d" color={off ? '#77767d' : '#777'} /></button>
    </div>
  </Spin>
);
const GraphCol = styled(Column)`background: #45444d; margin-left: 5px;`;
const Graph = styled.svg`flex: 1 1 0; width: 100%; min-height: 0; background: #45444d;`;

const aisacList: Item[] = [
  { lv: 0, ic: 'ball', t: 'Boss_Warning', open: true },
  { lv: 1, ic: 't', t: 'Track_Siren', open: true },
  { lv: 2, ic: 'aisac', t: 'Aisac_0', open: true },
];

const AisacView = () => (
  <AisacPanel>
    <Head title="AISAC" />
    <AisacGrid>
      <ListCol>
        <ListTitle>AISACリスト</ListTitle>
        <ListRows>
          {aisacList.map(it => <TreeRow key={it.t} it={it} />)}
          {['パン3D - 角度', 'ボリューム', 'ピッチ'].map(t => <Row key={t} $lv={3} $h={15}><Leafs>{t}</Leafs></Row>)}
        </ListRows>
      </ListCol>
      <ThinGrip />
      <FormHead>2: WarningAutoPan</FormHead>
      <Pos>
        <svg width="10" height="20"><path d="M0 0h10v12l-5 8-5-8z" fill="url(#pin)" /></svg>
        0.498
      </Pos>
      <Corner $h={22} $c={GREY} />
      <Form onSubmit={e => e.preventDefault()}>
        <TableBtn type="button" aria-label="Table">
          <svg width="12" height="12"><path d="M0 1.500h5M0 4.500h5M0 7.500h5M0 10.500h5M7 1.500h5M7 4.500h5M7 7.500h5M7 10.500h5" stroke="#242427" strokeWidth="2" /></svg>
        </TableBtn>
        <NameLine><Aisac />Aisac_0</NameLine>
        <Combo value="WarningAutoPan" icon={<Knob />} />
        <label htmlFor="ctl">コントロールタイプ</label>
        <Combo id="ctl" value="オートモジュレーション" />
        <label htmlFor="kind">タイプ</label>
        <Combo id="kind" value="ループ" />
        <label htmlFor="msec">時間[msec]</label>
        <SpinBox id="msec" v="600" />
        <label htmlFor="trig">トリガタイプ</label>
        <Combo id="trig" value="再生" off />
        <label htmlFor="key">トリガキー</label>
        <SpinBox id="key" v="0" off />
      </Form>
      <GraphCol>
        <RulerTicks step={25.5} sub={2} count={48} every={102} labels={['0.000', '0.200', '0.400', '0.600', '0.800']} />
        <Graph viewBox="0 0 510 291" preserveAspectRatio="none">
          {Array.from({ length: 9 }, (_, i) => <rect key={i} x={(i + 1) * 51} width="1" height="291" fill="#55555a" />)}
          <path d="M0 0 510 290" fill="none" stroke="#00e68a" strokeWidth="1" vectorEffect="non-scaling-stroke" />
          <path d="M0 170 510 71" fill="none" stroke="#0a0ae6" strokeWidth="1" vectorEffect="non-scaling-stroke" />
          <path d="M0 215H108C178 215 212 198 250 134C288 68 312 47 390 47H510" fill="none" stroke="#f0f020" strokeWidth="1" vectorEffect="non-scaling-stroke" />
        </Graph>
        <HRow><GrowBar><Scroll /></GrowBar><Zooms /></HRow>
      </GraphCol>
      <Column>
        <GrowBar $v><Scroll v /></GrowBar>
        <Zooms />
        <Corner $h={17} $c={GREY} />
      </Column>
    </AisacGrid>
  </AisacPanel>
);

/* ---------- level meter ---------- */

const MeterView = styled.svg`flex: 1; width: 100%; min-height: 0; background: #181818; font-family: ${HELV}; font-size: 10px; fill: #96969a;`;
const marks: [string, number][] = [['12', 18], ['6', 86], ['3', 120], ['0', 154], ['-3', 314], ['-6', 427], ['-12', 563], ['-24', 667], ['-48', 699]];
const LevelMeter = () => (
  <Panel>
    <Head title="レベルメーター" />
    <MeterView viewBox="0 0 149 719" preserveAspectRatio="none">
      {marks.map(([t, y]) => (
        <g key={t}>
          <rect y={y} width="149" height={t === '0' ? 2 : 1} fill={t === '0' ? '#b0b0b2' : '#88888a'} />
          <text x="2" y={y + 9} fill={t === '0' ? '#ddd' : undefined}>{t}</text>
        </g>
      ))}
      <rect x="29" y="424" width="13" height="277" fill="url(#meter)" />
      <rect x="44" y="411" width="13" height="290" fill="url(#meter)" />
      {[59, 74, 89, 104, 119, 134].map(x => <rect key={x} x={x} y="701" width="13" height="2" fill="#123f12" />)}
    </MeterView>
  </Panel>
);

/* ---------- bottom tabs ---------- */

const Dock = styled.nav`
  flex: none; height: 43px; background: #242424; border: solid #26253a; border-width: 1px 0; display: flex; align-items: center; padding-left: 4px; gap: 2px;
`;
const TabGrid = styled.div`
  display: grid; grid-template-columns: 75px 129px 84px 93px 102px 122px 77px 86px 73px 75px; grid-auto-rows: 19px;
`;
const Tab = styled.button<{ $on?: boolean; $thin?: boolean }>`
  display: flex; align-items: center; justify-content: center; gap: 4px; margin: 0 1px 1px 0; white-space: nowrap;
  background: ${p => (p.$on ? '#3a80a9' : '#5e4f62')}; border: 1px solid #3e3d48; font-size: 9px; font-weight: ${p => (p.$thin ? 500 : 700)};
  &:has(svg) { justify-content: flex-start; padding-left: 4px; }
`;
type TabDef = { t: string; on?: boolean; thin?: boolean; icon?: React.ReactNode };
const tabs: TabDef[] = [
  { t: 'インスペクター' }, { t: 'AISAC', on: true, thin: true, icon: <Aisac /> }, { t: 'ポイントリスト' }, { t: '被参照リスト' }, { t: 'ワークユニットツリー', on: true },
  { t: 'REACT', icon: <Reactor /> }, { t: 'マテリアル', icon: <Material /> }, { t: '検索' }, { t: 'ログ' }, { t: 'スタートページ' },
  { t: 'タイムライン', on: true }, { t: 'ミキサー(DSPバス設定)', icon: <Mixer /> }, { t: 'リストエディター' }, { t: 'プロジェクトツリー' }, { t: 'マテリアルツリー' },
  { t: 'パラメーターパレット', icon: <Palette /> }, { t: 'レベルメーター', on: true }, { t: 'ブックマーク', icon: <Bookmark /> }, { t: 'クイックヘルプ' },
];
const DockGrip = () => (
  <svg width="6" height="18">
    {[0, 3, 6, 9, 12, 15].map(y => <path key={y} d={`M0 ${y + 1}h2M3 ${y + 1}h2`} stroke="#7c7c80" strokeWidth="2" />)}
  </svg>
);
const Status = styled.footer`flex: none; height: 27px; background: ${GREY};`;

export default function App() {
  return (
    <Window>
      <Global />
      <Defs />
      <TitleBar>
        <Light $c="#fc5b57" aria-label="Close window" />
        <Light $c="#fdbc2e" aria-label="Minimize" />
        <Light $c="#28c73f" aria-label="Zoom window" />
        <Title>CRI Atom Craft  Ver.3.40.01 (built on Sep  6 2018)</Title>
      </TitleBar>
      <ToolBar>
        <Tool aria-label="New"><NewProj /></Tool>
        <Tool aria-label="Open"><OpenProj /></Tool>
        <Tool aria-label="Save"><Save /></Tool>
        <Sep />
        <Tool aria-label="Undo"><Undo /></Tool>
        <Tool aria-label="Redo"><Undo flip /></Tool>
        <Sep />
        <Tool aria-label="Build"><Build /></Tool>
        <Sep />
        <Tool aria-label="Play"><Play /></Tool>
        <Tool aria-label="Stop"><Stop /></Tool>
        <Sep />
        <Stats>
          <Stat $w={49}><dt>CPU使用率</dt><dd>18.9%</dd></Stat>
          <Gap $w={17} />
          <Stat $w={27}><dt>発音数</dt><dd>002</dd></Stat>
          <Gap $w={1} />
          <Stat $w={63}><dt>シーケンス時間</dt><dd>00:01.499</dd></Stat>
        </Stats>
        <Sep />
        <TrackPlay><input type="checkbox" />指定トラック再生</TrackPlay>
        <Sep />
        <Tool $w={24} aria-label="Previous"><Chevron /></Tool>
        <Tool $w={24} aria-label="Next"><Chevron right /></Tool>
        <Current><TIcon />Track_Alert<Tri dir="d" size={10} /></Current>
        <Fill />
        <Sep />
        <Target>プレビューターゲット<Combo value="PC" icon={<Disk />} /></Target>
        <Target>言語<Combo value="なし" /></Target>
        <Target>ターゲット<Combo value="PC" icon={<Disk />} /></Target>
        <Sep />
        <MidiBox>MIDI<Midi /></MidiBox>
      </ToolBar>
      <Main>
        <WorkUnits />
        <Middle>
          <Timeline />
          <AisacView />
        </Middle>
        <LevelMeter />
      </Main>
      <Dock>
        <DockGrip />
        <TabGrid>{tabs.map(t => <Tab key={t.t} $on={t.on} $thin={t.thin}>{t.icon}{t.t}</Tab>)}</TabGrid>
      </Dock>
      <Status />
    </Window>
  );
}
